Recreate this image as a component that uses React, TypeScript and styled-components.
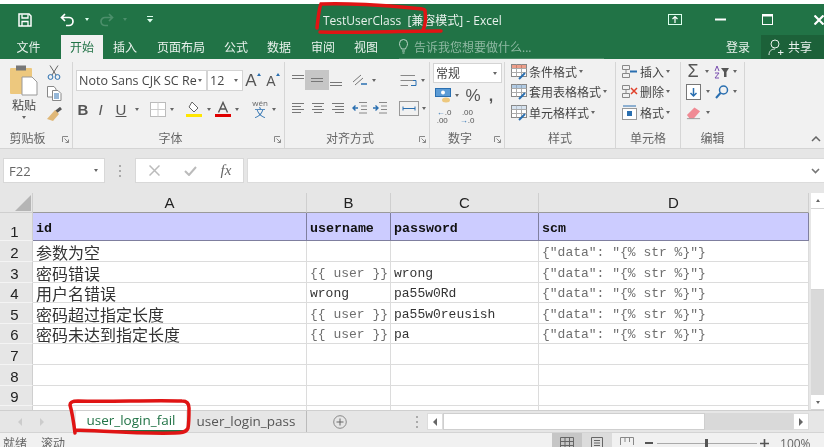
import React from "react";
import styled, { createGlobalStyle } from "styled-components";

const Global = createGlobalStyle`
  html, body { margin: 0; padding: 0; background: #fff; }
  * { box-sizing: border-box; }
`;

const CJK = `"Open Sans", "Noto Sans CJK SC", sans-serif`;

const Page = styled.div`
  position: relative;
  width: 824px;
  height: 447px;
  overflow: hidden;
  padding-top: 4px;
  display: flex;
  flex-direction: column;
  font-family: ${CJK};
  color: #444;
  filter: blur(0.4px);
`;

const TitleBar = styled.div`
  height: 31px;
  background: #217346;
  color: #e8f1ec;
  display: flex;
  align-items: center;
`;

const Title = styled.div`
  flex: 1;
  font-size: 12px;
  white-space: pre;
`;

// fixed-width cell, keeps small controls on the office ribbon grid
const Slot = styled.div<{ $w: number; $bg?: string; $top?: number }>`
  width: ${(p) => p.$w}px;
  height: 100%;
  flex: none;
  display: flex;
  align-items: ${(p) => (p.$top ? "flex-start" : "center")};
  justify-content: center;
  padding-top: ${(p) => p.$top || 0}px;
  background: ${(p) => p.$bg || "transparent"};
`;

const Spacer = styled.div`
  flex: 1;
`;

const Caret = styled.span<{ $c?: string }>`
  display: inline-block;
  width: 0;
  height: 0;
  border-left: 2.5px solid transparent;
  border-right: 2.5px solid transparent;
  border-top: 3px solid ${(p) => p.$c || "#666"};
`;

const TabBar = styled.div`
  height: 24px;
  background: #217346;
  display: flex;
  align-items: stretch;
  font-size: 12px;
  color: #e8f1ec;
`;

const MenuTab = styled.div<{ $w: number; $active?: boolean }>`
  width: ${(p) => p.$w}px;
  flex: none;
  display: flex;
  align-items: center;
  justify-content: center;
  background: ${(p) => (p.$active ? "#f1f1f1" : "transparent")};
  color: ${(p) => (p.$active ? "#217346" : "#e8f1ec")};
`;

const TellMe = styled.div`
  width: 205px;
  margin-left: 12px;
  display: flex;
  align-items: center;
  gap: 6px;
  color: #8fb9a3;
  border-bottom: 1px solid #4d8f6b;
  white-space: nowrap;
`;

const Login = styled.div`
  margin-left: auto;
  width: 35px;
  display: flex;
  align-items: center;
  font-size: 12px;
`;

const Share = styled.div`
  width: 63px;
  background: #1c6139;
  display: flex;
  align-items: center;
  gap: 4px;
  padding-left: 7px;
`;

const Ribbon = styled.div`
  height: 90px;
  background: #f1f1f1;
  border-bottom: 1px solid #d4d4d4;
  display: flex;
  flex: none;
`;

const Group = styled.div<{ $w: number; $last?: boolean }>`
  width: ${(p) => p.$w}px;
  flex: none;
  position: relative;
  display: flex;
  flex-direction: column;
  margin-top: 3px;
  border-right: ${(p) => (p.$last ? "none" : "1px solid #d6d6d6")};
`;

const GroupBody = styled.div`
  flex: 1;
  min-height: 0;
  display: flex;
  flex-direction: column;
`;

const GroupLabel = styled.div<{ $pad?: number }>`
  height: 18px;
  font-size: 12px;
  line-height: 18px;
  color: #666;
  text-align: center;
  padding-right: ${(p) => p.$pad || 0}px;
`;

const Launcher = styled.svg`
  position: absolute;
  right: 3px;
  bottom: 5px;
  width: 7px;
  height: 7px;
`;

const Line = styled.div<{ $h: number; $top?: number; $left?: number }>`
  height: ${(p) => p.$h}px;
  margin-top: ${(p) => p.$top || 0}px;
  padding-left: ${(p) => p.$left || 0}px;
  display: flex;
  align-items: center;
  flex: none;
`;

const Clipboard = styled.div`
  display: grid;
  grid-template-columns: 40px 20px;
  padding-left: 4px;
  height: 100%;
`;

const PasteButton = styled.div`
  display: flex;
  flex-direction: column;
  align-items: center;
  padding-top: 3px;
  font-size: 12px;
  line-height: 16px;
  color: #444;
  gap: 2px;
`;

const SmallTools = styled.div`
  display: flex;
  flex-direction: column;
  gap: 6px;
  padding-top: 3px;
  align-items: center;
`;

const Select = styled.div<{ $w: number; $size?: number }>`
  width: ${(p) => p.$w}px;
  height: 100%;
  background: #fff;
  border: 1px solid #d4d4d4;
  display: flex;
  align-items: center;
  justify-content: space-between;
  padding: 0 4px 0 2px;
  font-size: ${(p) => p.$size || 12}px;
  color: #444;
  white-space: nowrap;
`;

const FontMark = styled.span<{ $bold?: boolean; $italic?: boolean; $under?: boolean; $size?: number }>`
  font-family: "Liberation Sans", sans-serif;
  font-size: ${(p) => p.$size || 15}px;
  font-weight: ${(p) => (p.$bold ? 700 : 400)};
  font-style: ${(p) => (p.$italic ? "italic" : "normal")};
  text-decoration: ${(p) => (p.$under ? "underline" : "none")};
  color: #555;
`;

const Wen = styled.span`
  display: flex;
  flex-direction: column;
  align-items: center;
  font-size: 11px;
  line-height: 12px;
  color: #2a6fb0;
  span { font-size: 8px; line-height: 8px; color: #666; }
`;

const RowTool = styled.div`
  height: 21px;
  display: flex;
  align-items: center;
  gap: 2px;
  font-size: 12px;
  color: #444;
  white-space: nowrap;
`;

const Decimal = styled.span`
  font-family: "Liberation Sans", sans-serif;
  font-size: 8px;
  line-height: 7.5px;
  color: #555;
  display: block;
  white-space: pre;
  b { color: #2a6fb0; }
`;

const FormulaBar = styled.div`
  height: 44px;
  background: #e6e6e6;
  padding: 9px 0 10px 3px;
  display: flex;
  flex: none;
`;

const NameBox = styled.div`
  width: 102px;
  background: #fff;
  border: 1px solid #d8d8d8;
  display: flex;
  align-items: center;
  justify-content: space-between;
  padding: 0 6px 0 5px;
  font: 13px "Open Sans", sans-serif;
  color: #666;
`;

const FxBox = styled.div`
  width: 109px;
  background: #fff;
  border: 1px solid #d8d8d8;
  display: flex;
  align-items: center;
  font: italic 15px "Liberation Serif", serif;
  color: #666;
`;

const FormulaInput = styled.div`
  flex: 1;
  margin-left: 3px;
  background: #fff;
  border: 1px solid #dcdcdc;
  border-right: none;
  display: flex;
  align-items: center;
  justify-content: flex-end;
  padding-right: 4px;
`;

const SheetArea = styled.div`
  height: 217px;
  display: flex;
  flex: none;
  background: #e6e6e6;
`;

const Sheet = styled.div`
  width: 809px;
  flex: none;
  overflow: hidden;
  background: #fff;
`;

const SheetRow = styled.div<{ $h: number }>`
  display: grid;
  grid-template-columns: 33px 274px 84px 148px 270px;
  height: ${(p) => p.$h}px;
`;

const HeadCell = styled.div<{ $corner?: boolean }>`
  background: #e6e6e6;
  border-right: 1px solid #cfcfcf;
  border-bottom: 1px solid #9a9a9a;
  display: flex;
  align-items: center;
  justify-content: center;
  font: 15px "Liberation Sans", sans-serif;
  color: #222;
  ${(p) => p.$corner && "border-bottom-color: #cfcfcf; align-items: flex-end; justify-content: flex-end; padding: 0 1px 1px 0;"}
`;

const RowNum = styled.div`
  background: #e6e6e6;
  border-right: 1px solid #cfcfcf;
  border-bottom: 1px solid #f4f4f4;
  display: flex;
  align-items: flex-end;
  justify-content: center;
  padding-right: 3px;
  font: 15px/17px "Liberation Sans", sans-serif;
  color: #222;
`;

const Cell = styled.div<{ $head?: boolean; $cjk?: boolean; $muted?: boolean }>`
  background: ${(p) => (p.$head ? "#ccccff" : "#fff")};
  border-right: 1px solid ${(p) => (p.$head ? "#7f7f9f" : "#dcdcdc")};
  border-bottom: 1px solid ${(p) => (p.$head ? "#7f7f9f" : "#dcdcdc")};
  display: flex;
  align-items: flex-end;
  padding: 0 0 ${(p) => (p.$head ? 3 : 0)}px 3px;
  white-space: pre;
  color: ${(p) => (p.$head ? "#111" : p.$muted ? "#6f6f6f" : "#333")};
  font-family: ${(p) => (p.$cjk ? `"Noto Sans CJK SC", sans-serif` : `"Liberation Mono", monospace`)};
  font-size: ${(p) => (p.$cjk ? 16 : p.$head ? 13.3 : 13)}px;
  font-weight: ${(p) => (p.$head ? 700 : 400)};
  line-height: ${(p) => (p.$cjk ? 18 : 16)}px;
`;

const VScroll = styled.div`
  width: 13px;
  margin-left: 2px;
  flex: none;
  display: flex;
  flex-direction: column;
  background: #d9d9d9;
`;

const VButton = styled.div<{ $h: number }>`
  height: ${(p) => p.$h}px;
  background: #fff;
  border-bottom: 1px solid #d4d4d4;
  display: flex;
  align-items: center;
  justify-content: center;
  flex: none;
`;

const UpCaret = styled(Caret)`
  transform: rotate(180deg);
`;

const TopCaret = styled(UpCaret)`
  align-self: flex-start;
  margin-top: 3px;
`;

const TabRow = styled.div`
  height: 22px;
  background: #e6e6e6;
  border-top: 1px solid #cfcfcf;
  display: flex;
  flex: none;
  align-items: stretch;
  font: 13.5px/18px "Open Sans", sans-serif;
`;

const SheetTab = styled.div<{ $w: number; $active?: boolean }>`
  width: ${(p) => p.$w}px;
  flex: none;
  display: flex;
  align-items: center;
  justify-content: center;
  padding-bottom: 2px;
  background: ${(p) => (p.$active ? "#fff" : "transparent")};
  color: ${(p) => (p.$active ? "#217346" : "#555")};
  border-bottom: ${(p) => (p.$active ? "2px solid #217346" : "none")};
  border-right: ${(p) => (p.$active ? "none" : "1px solid #bbb")};
`;

const ScrollThumb = styled.div`
  width: 262px;
  flex: none;
  background: #fff;
  border: 1px solid #cfcfcf;
`;

const ScrollTrack = styled.div`
  display: flex;
  height: 17px;
  margin-top: 2px;
  width: 382px;
  background: #d9d9d9;
`;

const ScrollEnd = styled.div`
  width: 16px;
  flex: none;
  background: #fff;
  border: 1px solid #dcdcdc;
  display: flex;
  align-items: center;
  justify-content: center;
`;

const SideCaret = styled.span<{ $left?: boolean; $c?: string }>`
  width: 0;
  height: 0;
  border-top: 4px solid transparent;
  border-bottom: 4px solid transparent;
  ${(p) =>
    p.$left
      ? `border-right: 4px solid ${p.$c || "#666"};`
      : `border-left: 4px solid ${p.$c || "#666"};`}
`;

const StatusBar = styled.div`
  height: 15px;
  background: #f1f1f1;
  border-top: 1px solid #d4d4d4;
  display: flex;
  flex: none;
  font-size: 12px;
  line-height: 21px;
  color: #666;
  padding-left: 3px;
  overflow: hidden;
`;

const ZoomTrack = styled.div`
  width: 100px;
  height: 100%;
  position: relative;
  flex: none;
  &::before {
    content: "";
    position: absolute;
    left: 0;
    right: 0;
    top: 10px;
    height: 1px;
    background: #aaa;
  }
  &::after {
    content: "";
    position: absolute;
    left: 48px;
    top: 6px;
    width: 3px;
    height: 10px;
    background: #555;
  }
`;

const Marks = styled.svg`
  position: absolute;
  left: 0;
  top: 0;
  width: 824px;
  height: 447px;
  pointer-events: none;
`;

const Ico = ({ w, h, children }: { w: number; h: number; children: React.ReactNode }) => (
  <svg width={w} height={h} viewBox={`0 0 ${w} ${h}`} fill="none">
    {children}
  </svg>
);

const Lines = ({ rows, color = "#777" }: { rows: [number, number, number][]; color?: string }) => (
  <Ico w={14} h={14}>
    {rows.map(([x1, x2, y], i) => (
      <path key={i} d={`M${x1} ${y + 0.5}H${x2}`} stroke={color} />
    ))}
  </Ico>
);

const LaunchMark = () => (
  <Launcher viewBox="0 0 7 7" fill="none">
    <path d="M0.5 6V0.5H6" stroke="#888" />
    <path d="M2.5 2.5L6.5 6.5M6.5 3.5V6.5H3.5" stroke="#888" />
  </Launcher>
);

const SheetIcon = ({ accent }: { accent: string }) => (
  <Ico w={16} h={16}>
    <rect x="0.5" y="0.5" width="15" height="12" fill="#fff" stroke="#888" />
    <path d="M0.5 4.5H15.5M0.5 8.5H15.5M5.5 0.5V12.5M10.5 0.5V12.5" stroke="#aaa" />
    <rect x="1" y="1" width="14" height="3" fill={accent} opacity="0.6" />
    <path d="M8 15L14 9" stroke="#2a6fb0" strokeWidth="2" />
  </Ico>
);

const CellsIcon = ({ mark }: { mark: React.ReactNode }) => (
  <Ico w={17} h={15}>
    <path d="M1.5 1.5H8.5V5.5H1.5ZM1.5 9.5H8.5V13.5H1.5ZM5 5.5V9.5" stroke="#888" />
    {mark}
  </Ico>
);

const sheetRows: { h: number; n: number; a: string; b: string; c: string; d: string }[] = [
  { h: 21, n: 2, a: "参数为空", b: "", c: "", d: `{"data": "{% str %}"}` },
  { h: 20.6, n: 3, a: "密码错误", b: "{{ user }}", c: "wrong", d: `{"data": "{% str %}"}` },
  { h: 20.6, n: 4, a: "用户名错误", b: "wrong", c: "pa55w0Rd", d: `{"data": "{% str %}"}` },
  { h: 20.6, n: 5, a: "密码超过指定长度", b: "{{ user }}", c: "pa55w0reusish", d: `{"data": "{% str %}"}` },
  { h: 20.6, n: 6, a: "密码未达到指定长度", b: "{{ user }}", c: "pa", d: `{"data": "{% str %}"}` },
  { h: 20.6, n: 7, a: "", b: "", c: "", d: "" },
  { h: 20.6, n: 8, a: "", b: "", c: "", d: "" },
  { h: 20.6, n: 9, a: "", b: "", c: "", d: "" },
  { h: 20.6, n: 10, a: "", b: "", c: "", d: "" },
];

export default function App() {
  return (
    <Page>
      <Global />
      <TitleBar>
        <Slot $w={18} />
        <Slot $w={14}>
          <Ico w={14} h={14}>
            <path d="M1 1H11L13 3V13H1Z" stroke="#fff" strokeWidth="1.5" />
            <path d="M4 1.5V5H10V1.5M4 13V8.5H10V13" stroke="#fff" strokeWidth="1.3" />
          </Ico>
        </Slot>
        <Slot $w={28} />
        <Slot $w={15}>
          <Ico w={15} h={14}>
            <path d="M5 1L1.5 4.5L5 8M2 4.5H9A4 4 0 0 1 9 12.5H6" stroke="#fff" strokeWidth="1.7" />
          </Ico>
        </Slot>
        <Slot $w={24}><Caret $c="#dfe" /></Slot>
        <Slot $w={15}>
          <Ico w={15} h={14}>
            <path d="M10 1L13.5 4.5L10 8M13 4.5H6A4 4 0 0 0 6 12.5H9" stroke="#4c8f6b" strokeWidth="1.7" />
          </Ico>
        </Slot>
        <Slot $w={22}><Caret $c="#4c8f6b" /></Slot>
        <Slot $w={28}>
          <Ico w={6} h={7}>
            <path d="M0 0.5H6" stroke="#dfe" />
            <path d="M0 3H6L3 6.5Z" fill="#dfe" />
          </Ico>
        </Slot>
        <Slot $w={159} />
        <Title>TestUserClass  [兼容模式] - Excel</Title>
        <Slot $w={14}>
          <Ico w={14} h={11}>
            <rect x="0.5" y="0.5" width="13" height="10" stroke="#dfe" />
            <path d="M7 9V3M4.5 5L7 2.5L9.5 5" stroke="#fff" strokeWidth="1.2" />
          </Ico>
        </Slot>
        <Slot $w={33} />
        <Slot $w={12}><Ico w={12} h={3}><path d="M0 1.5H11" stroke="#fff" strokeWidth="2" /></Ico></Slot>
        <Slot $w={35} />
        <Slot $w={11}>
          <Ico w={11} h={11}>
            <rect x="0.5" y="0.5" width="10" height="10" stroke="#fff" />
            <path d="M0.5 1.5H10.5" stroke="#fff" strokeWidth="2" />
          </Ico>
        </Slot>
        <Slot $w={41} />
        <Slot $w={10}><Ico w={10} h={10}><path d="M0.5 0.5L9.5 9.5M9.5 0.5L0.5 9.5" stroke="#fff" strokeWidth="2.2" /></Ico></Slot>
      </TitleBar>

      <TabBar>
        <MenuTab $w={15} />
        <MenuTab $w={27}>文件</MenuTab>
        <MenuTab $w={19} />
        <MenuTab $w={42} $active>开始</MenuTab>
        <MenuTab $w={44}>插入</MenuTab>
        <MenuTab $w={68}>页面布局</MenuTab>
        <MenuTab $w={42}>公式</MenuTab>
        <MenuTab $w={44}>数据</MenuTab>
        <MenuTab $w={44}>审阅</MenuTab>
        <MenuTab $w={42}>视图</MenuTab>
        <TellMe>
          <Ico w={9} h={15}>
            <path d="M2.5 10C2 8 0.5 7.5 0.5 4.5A4 4 0 0 1 8.5 4.5C8.5 7.5 7 8 6.5 10ZM3 12H6M3.5 14H5.5" stroke="#b9d5c6" />
          </Ico>
          告诉我您想要做什么...
        </TellMe>
        <Login>登录</Login>
        <Share>
          <Ico w={16} h={17}>
            <circle cx="7" cy="5" r="4" stroke="#e8f1ec" />
            <path d="M1 16C1 12 3.5 10 7 10M10 13.5H15.5M12.7 11V16" stroke="#e8f1ec" />
          </Ico>
          共享
        </Share>
      </TabBar>

      <Ribbon>
        <Group $w={73}>
          <GroupBody>
            <Clipboard>
              <PasteButton>
                <Ico w={30} h={31}>
                  <rect x="1" y="3" width="22" height="26" rx="1" fill="#edc87e" />
                  <rect x="7" y="0.5" width="10" height="5" fill="#777" />
                  <path d="M13 12H23L28 17V30H13Z" fill="#fff" stroke="#999" />
                </Ico>
                粘贴
                <Caret />
              </PasteButton>
              <SmallTools>
                <Ico w={14} h={15}>
                  <path d="M3 0.5L9 10M11 0.5L5 10" stroke="#666" />
                  <circle cx="3.5" cy="12" r="2.4" stroke="#2a6fb0" />
                  <circle cx="10.5" cy="12" r="2.4" stroke="#2a6fb0" />
                </Ico>
                <Ico w={15} h={15}>
                  <path d="M0.5 0.5H7L9 3V11H0.5Z" fill="#fff" stroke="#888" />
                  <path d="M5.5 4.5H11L14 7.5V14.5H5.5Z" fill="#fff" stroke="#888" />
                  <path d="M7 8H12M7 10H12M7 12H12" stroke="#2a6fb0" />
                </Ico>
                <Ico w={16} h={15}>
                  <path d="M10 5L15 1" stroke="#555" strokeWidth="3" />
                  <path d="M9 3L13 7L7 14L1 12Z" fill="#e0b878" />
                </Ico>
              </SmallTools>
            </Clipboard>
          </GroupBody>
          <GroupLabel $pad={17}>剪贴板</GroupLabel>
          <LaunchMark />
        </Group>

        <Group $w={212}>
          <GroupBody>
            <Line $h={21} $top={8} $left={3}>
              <Select $w={131} $size={12.5}>Noto Sans CJK SC Re<Caret /></Select>
              <Select $w={36} $size={12.5}>12<Caret /></Select>
              <Slot $w={20}><FontMark $size={17}>A</FontMark><TopCaret $c="#2a6fb0" /></Slot>
              <Slot $w={20}><FontMark $size={14}>A</FontMark><TopCaret $c="#2a6fb0" /></Slot>
            </Line>
            <Line $h={20} $top={8} $left={3}>
              <Slot $w={14}><FontMark $bold>B</FontMark></Slot>
              <Slot $w={21}><FontMark $italic>I</FontMark></Slot>
              <Slot $w={20}><FontMark $under>U</FontMark></Slot>
              <Slot $w={11}><Caret /></Slot>
              <Slot $w={8} />
              <Slot $w={16}>
                <Ico w={16} h={15}>
                  <rect x="0.5" y="0.5" width="15" height="14" stroke="#bbb" fill="#fff" />
                  <path d="M8 0.5V14.5M0.5 7.5H15.5" stroke="#ccc" />
                </Ico>
              </Slot>
              <Slot $w={12}><Caret /></Slot>
              <Slot $w={8} />
              <Slot $w={16}>
                <Ico w={16} h={16}>
                  <path d="M6 1L12 7L8 11L3 6Z" fill="#fff" stroke="#666" />
                  <path d="M0 13H16V16H0Z" fill="#ffe600" />
                </Ico>
              </Slot>
              <Slot $w={13}><Caret /></Slot>
              <Slot $w={16}>
                <Ico w={16} h={16}>
                  <path d="M3.5 11.5L8 1.5L12.5 11.5M5 8H11" stroke="#555" strokeWidth="1.4" />
                  <path d="M0 13H16V16H0Z" fill="#e00000" />
                </Ico>
              </Slot>
              <Slot $w={12}><Caret /></Slot>
              <Slot $w={9} />
              <Slot $w={16}><Wen><span>wén</span>文</Wen></Slot>
              <Slot $w={12}><Caret /></Slot>
            </Line>
          </GroupBody>
          <GroupLabel $pad={16}>字体</GroupLabel>
          <LaunchMark />
        </Group>

        <Group $w={145}>
          <GroupBody>
            <Line $h={20} $top={8} $left={6}>
              <Slot $w={14}><Lines rows={[[1, 13, 2], [1, 13, 5]]} /></Slot>
              <Slot $w={24} $bg="#c6c6c6"><Lines rows={[[1, 13, 5], [1, 13, 8]]} /></Slot>
              <Slot $w={14}><Lines rows={[[1, 13, 9], [1, 13, 12]]} /></Slot>
              <Slot $w={8} />
              <Slot $w={18}>
                <Ico w={16} h={14}>
                  <path d="M1 9L9 2M3 12L11 5" stroke="#777" />
                  <path d="M9 11H15" stroke="#2a6fb0" strokeWidth="1.5" />
                </Ico>
              </Slot>
              <Slot $w={9}><Caret /></Slot>
              <Slot $w={21} />
              <Slot $w={20}>
                <Ico w={18} h={15}>
                  <path d="M0.5 2.5H15M0.5 7.5H13M0.5 12.5H8" stroke="#888" />
                  <path d="M13 7.5H16V12.5H11" stroke="#2a6fb0" />
                </Ico>
              </Slot>
              <Slot $w={8}><Caret /></Slot>
            </Line>
            <Line $h={20} $top={8} $left={6}>
              <Slot $w={14}><Lines rows={[[1, 13, 2], [1, 10, 5], [1, 13, 8], [1, 10, 11]]} /></Slot>
              <Slot $w={6} />
              <Slot $w={14}><Lines rows={[[1, 13, 2], [3, 11, 5], [1, 13, 8], [3, 11, 11]]} /></Slot>
              <Slot $w={6} />
              <Slot $w={14}><Lines rows={[[1, 13, 2], [4, 13, 5], [1, 13, 8], [4, 13, 11]]} /></Slot>
              <Slot $w={6} />
              <Slot $w={17}>
                <Ico w={16} h={14}>
                  <path d="M7 1.5H15M9 5H15M9 8.5H15M7 12H15" stroke="#888" />
                  <path d="M6 7H1M3.5 4.5L1 7L3.5 9.5" stroke="#2a6fb0" strokeWidth="1.4" />
                </Ico>
              </Slot>
              <Slot $w={3} />
              <Slot $w={17}>
                <Ico w={16} h={14}>
                  <path d="M7 1.5H15M9 5H15M9 8.5H15M7 12H15" stroke="#888" />
                  <path d="M1 7H6M3.5 4.5L6 7L3.5 9.5" stroke="#2a6fb0" strokeWidth="1.4" />
                </Ico>
              </Slot>
              <Slot $w={11} />
              <Slot $w={20}>
                <Ico w={20} h={15}>
                  <rect x="0.5" y="0.5" width="19" height="14" stroke="#999" />
                  <path d="M4 7.5H16M4 5.5V9.5M16 5.5V9.5" stroke="#2a6fb0" />
                </Ico>
              </Slot>
              <Slot $w={9}><Caret /></Slot>
            </Line>
          </GroupBody>
          <GroupLabel $pad={14}>对齐方式</GroupLabel>
          <LaunchMark />
        </Group>

        <Group $w={75}>
          <GroupBody>
            <Line $h={20} $top={1} $left={3}>
              <Select $w={69}>常规<Caret /></Select>
            </Line>
            <Line $h={19} $top={3} $left={5}>
              <Slot $w={16}>
                <Ico w={16} h={15}>
                  <rect x="0.5" y="0.5" width="15" height="8" fill="#5b9bd5" stroke="#2a6fb0" />
                  <circle cx="8" cy="4.5" r="2" fill="#fff" />
                  <ellipse cx="11" cy="12" rx="4" ry="2.5" fill="#edc87e" />
                </Ico>
              </Slot>
              <Slot $w={11}><Caret /></Slot>
              <Slot $w={22}><FontMark $size={17}>%</FontMark></Slot>
              <Slot $w={14}><FontMark $bold $size={16}>,</FontMark></Slot>
            </Line>
            <Line $h={19} $top={2} $left={5}>
              <Slot $w={18}><Decimal><b>←</b>.0{"\n"}.00</Decimal></Slot>
              <Slot $w={5} />
              <Slot $w={18}><Decimal> .00{"\n"}<b>→</b>.0</Decimal></Slot>
            </Line>
          </GroupBody>
          <GroupLabel $pad={14}>数字</GroupLabel>
          <LaunchMark />
        </Group>

        <Group $w={111}>
          <GroupBody>
            <Line $h={19} $left={6}>
              <RowTool><SheetIcon accent="#e06040" />条件格式<Caret /></RowTool>
            </Line>
            <Line $h={21} $left={6}>
              <RowTool><SheetIcon accent="#7fa8d0" />套用表格格式<Caret /></RowTool>
            </Line>
            <Line $h={21} $left={6}>
              <RowTool><SheetIcon accent="#bcd0e4" />单元格样式<Caret /></RowTool>
            </Line>
          </GroupBody>
          <GroupLabel>样式</GroupLabel>
        </Group>

        <Group $w={65}>
          <GroupBody>
            <Line $h={19} $left={5}>
              <RowTool>
                <CellsIcon mark={<path d="M9 7.5H16" stroke="#2a6fb0" strokeWidth="2" />} />
                插入 <Caret />
              </RowTool>
            </Line>
            <Line $h={21} $left={5}>
              <RowTool>
                <CellsIcon mark={<path d="M10 4L16 10M16 4L10 10" stroke="#e0402a" strokeWidth="1.5" />} />
                删除 <Caret />
              </RowTool>
            </Line>
            <Line $h={21} $left={5}>
              <RowTool>
                <Ico w={17} h={15}>
                  <rect x="1.5" y="3.5" width="14" height="11" fill="#fff" stroke="#999" />
                  <rect x="6" y="6" width="5" height="5" fill="#2a6fb0" />
                  <path d="M2 1H15" stroke="#2a6fb0" />
                </Ico>
                格式<Caret />
              </RowTool>
            </Line>
          </GroupBody>
          <GroupLabel>单元格</GroupLabel>
        </Group>

        <Group $w={64}>
          <GroupBody>
            <Line $h={19} $left={5}>
              <Slot $w={14}><FontMark $size={18}>Σ</FontMark></Slot>
              <Slot $w={14}><Caret /></Slot>
              <Slot $w={16}>
                <Ico w={16} h={14}>
                  <path d="M1 6L3 1L5 6M1 8H5L1 13H5" stroke="#7a4fb0" />
                  <path d="M7 3H15L12.5 7V12H10V7Z" fill="#555" />
                </Ico>
              </Slot>
              <Slot $w={10}><Caret /></Slot>
            </Line>
            <Line $h={21} $left={5}>
              <Slot $w={15}>
                <Ico w={15} h={16}>
                  <rect x="0.5" y="0.5" width="14" height="15" fill="#fff" stroke="#777" />
                  <path d="M7.5 4V12M4.5 9L7.5 12L10.5 9" stroke="#2a6fb0" strokeWidth="1.5" />
                </Ico>
              </Slot>
              <Slot $w={13}><Caret /></Slot>
              <Slot $w={16}>
                <Ico w={14} h={14}>
                  <circle cx="8.5" cy="5" r="4" stroke="#2a6fb0" strokeWidth="1.5" />
                  <path d="M5.5 8L1 13" stroke="#2a6fb0" strokeWidth="2" />
                </Ico>
              </Slot>
              <Slot $w={10}><Caret /></Slot>
            </Line>
            <Line $h={21} $left={5}>
              <Slot $w={15}>
                <Ico w={16} h={14}>
                  <path d="M1 9L9 1L15 5L8 13H4Z" fill="#f08a94" />
                  <path d="M1 13H15" stroke="#999" />
                </Ico>
              </Slot>
              <Slot $w={13}><Caret /></Slot>
            </Line>
          </GroupBody>
          <GroupLabel>编辑</GroupLabel>
        </Group>

        <Group $w={78} $last>
          <GroupBody />
          <Line $h={18} $left={66}>
            <Ico w={10} h={6}><path d="M1 5L5 1L9 5" stroke="#666" strokeWidth="1.5" /></Ico>
          </Line>
        </Group>
      </Ribbon>

      <FormulaBar>
        <NameBox>F22<Caret /></NameBox>
        <Slot $w={30}>
          <Ico w={2} h={12}><path d="M1 0V2M1 5V7M1 10V12" stroke="#aaa" strokeWidth="2" /></Ico>
        </Slot>
        <FxBox>
          <Slot $w={11} />
          <Slot $w={14}><Ico w={11} h={11}><path d="M0.5 0.5L10.5 10.5M10.5 0.5L0.5 10.5" stroke="#bbb" strokeWidth="1.5" /></Ico></Slot>
          <Slot $w={22} />
          <Slot $w={14}><Ico w={13} h={10}><path d="M1 5L5 9L12 1" stroke="#bbb" strokeWidth="2" /></Ico></Slot>
          <Slot $w={22} />
          <Slot $w={14}>fx</Slot>
        </FxBox>
        <FormulaInput>
          <Ico w={9} h={6}><path d="M1 1L4.5 4.5L8 1" stroke="#777" strokeWidth="1.6" /></Ico>
        </FormulaInput>
      </FormulaBar>

      <SheetArea>
        <Sheet>
          <SheetRow $h={20}>
            <HeadCell $corner>
              <Ico w={16} h={16}><path d="M16 0V16H0Z" fill="#b5b5b5" /></Ico>
            </HeadCell>
            <HeadCell>A</HeadCell>
            <HeadCell>B</HeadCell>
            <HeadCell>C</HeadCell>
            <HeadCell>D</HeadCell>
          </SheetRow>
          <SheetRow $h={28}>
            <RowNum>1</RowNum>
            <Cell $head>id</Cell>
            <Cell $head>username</Cell>
            <Cell $head>password</Cell>
            <Cell $head>scm</Cell>
          </SheetRow>
          {sheetRows.map((r) => (
            <SheetRow key={r.n} $h={r.h}>
              <RowNum>{r.n}</RowNum>
              <Cell $cjk>{r.a}</Cell>
              <Cell $muted={r.b.startsWith("{{")}>{r.b}</Cell>
              <Cell>{r.c}</Cell>
              <Cell $muted>{r.d}</Cell>
            </SheetRow>
          ))}
        </Sheet>
        <VScroll>
          <VButton $h={16}><UpCaret /></VButton>
          <VButton $h={81} />
          <Spacer />
          <VButton $h={15}><Caret /></VButton>
        </VScroll>
      </SheetArea>

      <TabRow>
        <Slot $w={16} />
        <Slot $w={8}><SideCaret $left $c="#ccc" /></Slot>
        <Slot $w={14} />
        <Slot $w={8}><SideCaret $c="#ccc" /></Slot>
        <Slot $w={30} />
        <SheetTab $w={110} $active>user_login_fail</SheetTab>
        <SheetTab $w={121}>user_login_pass</SheetTab>
        <Slot $w={26} />
        <Slot $w={14}>
          <Ico w={14} h={14}>
            <circle cx="7" cy="7" r="6.3" stroke="#888" />
            <path d="M3.5 7H10.5M7 3.5V10.5" stroke="#666" />
          </Ico>
        </Slot>
        <Slot $w={67} />
        <Slot $w={6}><Ico w={2} h={12}><path d="M1 0V2M1 5V7M1 10V12" stroke="#aaa" strokeWidth="2" /></Ico></Slot>
        <Slot $w={7} />
        <ScrollTrack>
          <ScrollEnd><SideCaret $left /></ScrollEnd>
          <ScrollThumb />
          <Spacer />
          <ScrollEnd><SideCaret /></ScrollEnd>
        </ScrollTrack>
      </TabRow>

      <StatusBar>
        就绪
        <Slot $w={14} />
        滚动
        <Slot $w={487} />
        <Slot $w={30} $bg="#c6c6c6" $top={4}>
          <Ico w={14} h={12}><path d="M0.5 0.5H13.5V11.5H0.5ZM0.5 4.5H13.5M0.5 8.5H13.5M5 0.5V11.5M9.5 0.5V11.5" stroke="#666" /></Ico>
        </Slot>
        <Slot $w={30} $bg="#dcdcdc" $top={4}>
          <Ico w={12} h={12}><path d="M0.5 0.5H11.5V11.5H0.5ZM3 3.5H9M3 6H9M3 8.5H9" stroke="#666" /></Ico>
        </Slot>
        <Slot $w={30} $top={4}>
          <Ico w={14} h={12}><path d="M0.5 8V0.5H13.5V8M5 0.5V5M9.5 0.5V5" stroke="#888" /></Ico>
        </Slot>
        <Slot $w={3} />
        <Slot $w={8} $top={9}><Ico w={8} h={2}><path d="M0 1H8" stroke="#555" strokeWidth="2" /></Ico></Slot>
        <Slot $w={4} />
        <ZoomTrack />
        <Slot $w={3} />
        <Slot $w={9} $top={6}><Ico w={9} h={9}><path d="M0 4.5H9M4.5 0V9" stroke="#555" strokeWidth="1.6" /></Ico></Slot>
        <Slot $w={11} />
        100%
      </StatusBar>

      <Marks viewBox="0 0 824 447" fill="none">
        <path
          d="M317 28C318 18 319 8 321 4C345 3 385 5 412 8C418 9 425 8 425 11C426 18 425 26 423 30M320 32C355 33 400 31 441 31"
          stroke="#e01414"
          strokeWidth="3.5"
          strokeLinecap="round"
        />
        <path
          d="M75 433C74 425 72 412 70 405C70 402 73 401 78 401C110 402 150 400 182 401C187 401 189 404 189 408C189 415 189 423 188 428C186 433 180 433 175 433C140 434 105 431 75 430"
          stroke="#e01414"
          strokeWidth="3.5"
          strokeLinecap="round"
        />
      </Marks>
    </Page>
  );
}
